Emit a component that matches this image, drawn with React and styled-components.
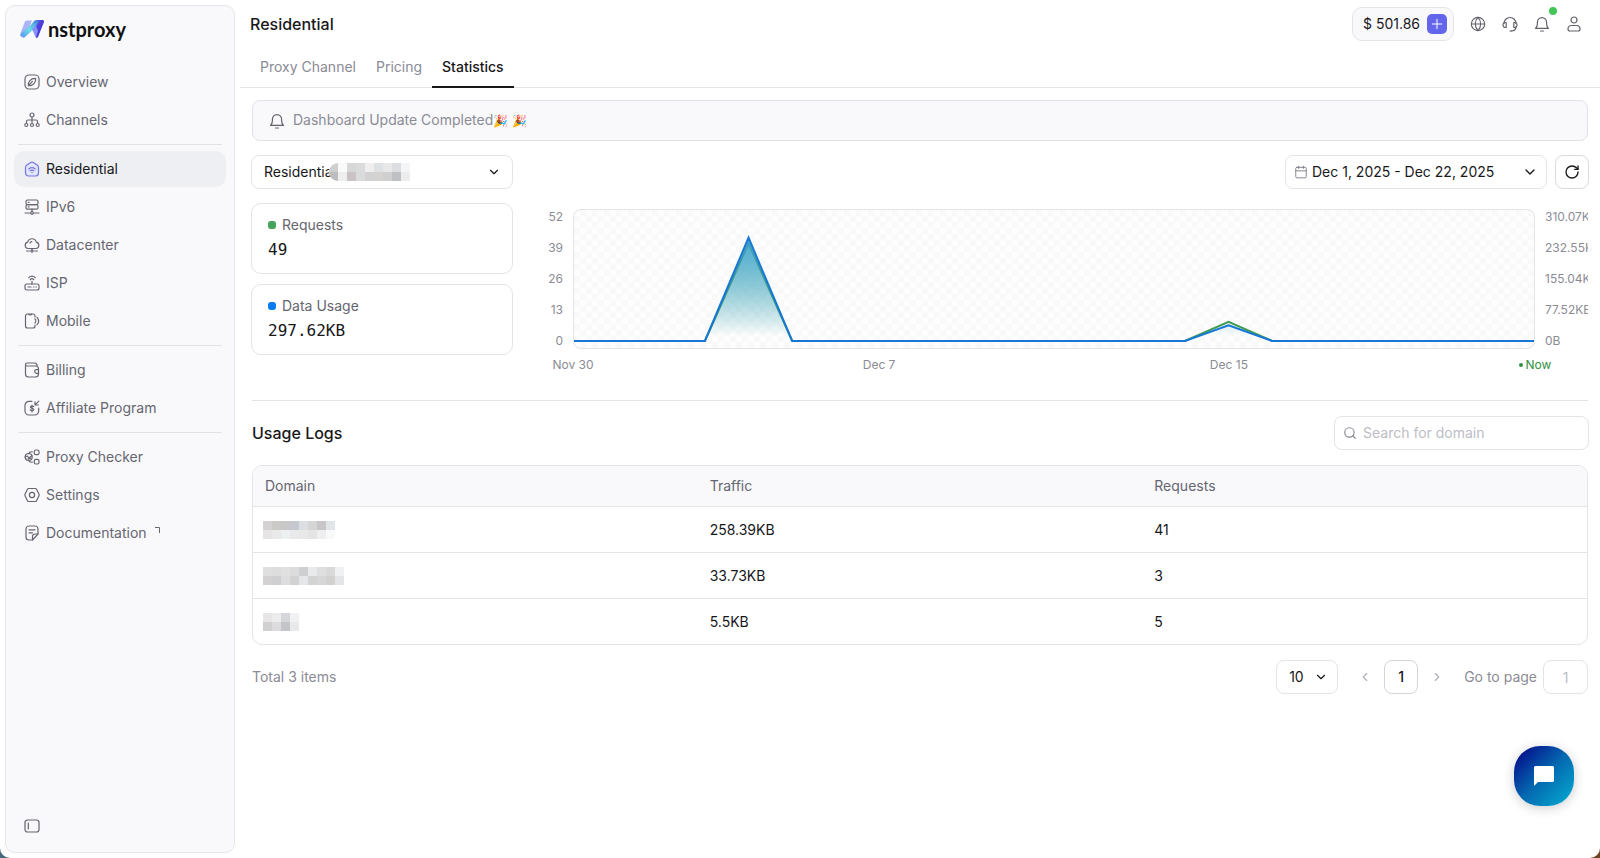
import React, { useState } from "react";
import styled, { createGlobalStyle, css } from "styled-components";
import {
  Calendar,
  ChevronDown,
  ChevronLeft,
  ChevronRight,
  Globe,
  Plus,
  RotateCw,
  Search,
} from "lucide-react";

const icons = {
  overview: (
    <>
      <rect x="1" y="1" width="14" height="14" rx="4" />
      <path d="M4.4 11.6c-.7-3.6 2.3-7.4 7.2-7.2.6 4-2.4 7.6-7.200 7.200z" />
      <path d="M4.400 11.600l4-4.200" />
    </>
  ),
  channels: (
    <>
      <circle cx="8" cy="3" r="2" />
      <path d="M8 5v6M2.500 11V9.500a1.500 1.500 0 0 1 1.500-1.500h8a1.500 1.500 0 0 1 1.500 1.500V11" />
      <circle cx="2.300" cy="13" r="1.500" />
      <circle cx="8" cy="13" r="1.500" />
      <circle cx="13.700" cy="13" r="1.500" />
    </>
  ),
  residential: (
    <>
      <path
        d="M1.500 6.500c0-1.100.5-1.800 1.400-2.400L6.600 1.600a2.500 2.500 0 0 1 2.800 0l3.700 2.500c.9.6 1.400 1.300 1.400 2.400V12a3 3 0 0 1-3 3h-7a3 3 0 0 1-3-3z"
        fill="#e2e5fb"
      />
      <path d="M4.800 8c1.900-1.500 4.500-1.500 6.400 0M6.300 9.800c1-.8 2.400-.8 3.400 0M8 11.600v.1" />
    </>
  ),
  ipv6: (
    <>
      <rect x="2" y="1" width="12" height="4.600" rx="1.500" />
      <rect x="2" y="5.600" width="12" height="4.600" rx="1.500" />
      <path d="M4.300 3.300h.8M4.300 7.900h.8M8 10.200v2.300M1 14h5M10 14h5" />
      <circle cx="8" cy="14" r="1.300" />
    </>
  ),
  datacenter: (
    <>
      <path d="M4 11.500a3.200 3.200 0 0 1-.3-6.300 4.400 4.400 0 0 1 8.600 0 3.200 3.200 0 0 1-.3 6.300z" />
      <path d="M6 6.200a2 2 0 0 1 1.800-1.500M8 11.500V13M2.500 14h3M10.500 14h3" />
      <circle cx="8" cy="14" r="1.100" />
    </>
  ),
  isp: (
    <>
      <rect x="1" y="9" width="14" height="6" rx="2" />
      <path d="M4 12h3M9.500 12h.4M12 12h.4M8 6.300V9M4.800 2.600c1.800-1.900 4.600-1.900 6.400 0M6.300 4.500c1-1 2.400-1 3.400 0" />
    </>
  ),
  mobile: (
    <>
      <path d="M11 4V3a2 2 0 0 0-2-2H3.500a2 2 0 0 0-2 2v10a2 2 0 0 0 2 2H9a2 2 0 0 0 2-2v-1" />
      <path d="M4.800 1.200c.2 1 2.700 1 2.900 0M11 6c1 1 1 3 0 4M13 4.300c2 2.200 2 5.200 0 7.400" />
    </>
  ),
  billing: (
    <>
      <path d="M1.500 3.500v8.500a3 3 0 0 0 3 3h7a3 3 0 0 0 3-3V7a3 3 0 0 0-3-3H3a1.500 1.500 0 0 1-1.500-1.500c0-.8.7-1.500 1.500-1.500h7.500A2.500 2.500 0 0 1 13 3.500v.8" />
      <path d="M14.500 7.700h-2a1.800 1.800 0 0 0 0 3.600h2" />
    </>
  ),
  affiliate: (
    <>
      <path d="M8 1.300H5a4 4 0 0 0-4 4V11a4 4 0 0 0 4 4h5.700a4 4 0 0 0 4-4V8" />
      <path d="M14.800 1.200l-3.600 3.600M11 1.800V5h3.300" />
      <path d="M9.700 6.700c-.7-.8-3.300-.9-3.300.5 0 1.500 3.400.6 3.400 2.200 0 1.500-2.800 1.400-3.600.4M8 5v7" />
    </>
  ),
  checker: (
    <>
      <rect x="10.300" y="1" width="4.700" height="4.700" rx="1.500" />
      <rect x="10.300" y="10.300" width="4.700" height="4.700" rx="1.500" />
      <path d="M8.300 2.800C6 2.600 5 3.500 4.600 4.800M8.300 13.200c-2.300.2-3.300-.7-3.700-2" />
      <circle cx="4.700" cy="8" r="3.500" />
      <path d="M1 8l2.400-1 1.400 2L8 6.800M4 10l2.600-.7" />
    </>
  ),
  settings: (
    <>
      <path d="M4.700 1.500h6.600c.5 0 .9.200 1.100.6l2.500 5c.3.600.3 1.200 0 1.800l-2.500 5c-.2.400-.6.600-1.100.6H4.700c-.5 0-.9-.2-1.100-.6l-2.500-5c-.3-.6-.3-1.200 0-1.800l2.500-5c.2-.4.600-.6 1.100-.6z" />
      <circle cx="8" cy="8" r="2.600" />
    </>
  ),
  docs: (
    <>
      <path d="M14 9V4a3 3 0 0 0-3-3H5a3 3 0 0 0-3 3v8a3 3 0 0 0 3 3h3.500z" />
      <path d="M14 9h-3a2.500 2.500 0 0 0-2.500 2.500V15M5 4.800h6M5 7.800h3.500" />
    </>
  ),
  panel: (
    <>
      <rect x="1" y="2" width="14" height="12" rx="2.500" />
      <path d="M4.300 5v6" />
    </>
  ),
  headset: (
    <>
      <path d="M2 7.500a6 6 0 0 1 12 0M14 10.500c0 3-1.500 4.300-4.500 4.500" />
      <path d="M4.200 6.500v5H3.300A2.300 2.300 0 0 1 1 9.200v-.4a2.300 2.300 0 0 1 2.300-2.300zM11.800 6.500v5h.9A2.300 2.300 0 0 0 15 9.200v-.4a2.300 2.300 0 0 0-2.300-2.300z" />
      <path d="M8 15h1.500" />
    </>
  ),
  bell: (
    <>
      <path d="M1.500 12.300h13c-1.200-1.200-1.900-2.600-1.900-4.300V6.200a4.600 4.600 0 0 0-9.200 0V8c0 1.700-.7 3.100-1.900 4.300z" />
      <path d="M6.500 15h3" />
    </>
  ),
  user: (
    <>
      <circle cx="8" cy="4" r="3" />
      <path d="M5.500 9.500h5a3.500 3.500 0 0 1 3.500 3.500c0 1.200-.8 2-2 2H4c-1.200 0-2-.8-2-2a3.500 3.500 0 0 1 3.500-3.500z" />
    </>
  ),
};

function Icon({ name, size = 16 }) {
  return (
    <svg
      width={size}
      height={size}
      viewBox="0 0 16 16"
      fill="none"
      stroke="currentColor"
      strokeWidth="1.200"
      strokeLinecap="round"
      strokeLinejoin="round"
      aria-hidden="true"
    >
      {icons[name]}
    </svg>
  );
}

function LogoMark() {
  return (
    <svg width="25" height="20" viewBox="0 0 25 20" aria-hidden="true">
      <defs>
        <linearGradient id="logoA" x1="0" y1="1" x2="1" y2="0">
          <stop offset="0" stopColor="#5c8df2" />
          <stop offset="0.450" stopColor="#6fdce8" />
          <stop offset="0.700" stopColor="#58b4e0" />
          <stop offset="1" stopColor="#3f55d8" />
        </linearGradient>
        <linearGradient id="logoB" x1="0" y1="0" x2="1" y2="1">
          <stop offset="0" stopColor="#5a4ff0" />
          <stop offset="1" stopColor="#3a28b8" />
        </linearGradient>
      </defs>
      <path d="M5 2.500Q5.500 1.500 7 1.500h5L9 9l-8 6-.5-1z" fill="#a9b4fa" />
      <path d="M1 14l9-7 4-5q1-1 3-1h4l-7 9-9 8q-1 1-2 .5L.5 17q-.7-1 .5-3z" fill="url(#logoA)" />
      <path d="M12 10l5-4.500 3 5-2.500 8q-1 .5-2-.5z" fill="#8590f8" />
      <path d="M20 1h3q1.500.5 1 2l-6 15q-.5 1-2 .5L18 12l-2-5z" fill="url(#logoB)" />
    </svg>
  );
}

const navGroups = [
  [
    ["overview", "Overview"],
    ["channels", "Channels"],
  ],
  [
    ["residential", "Residential"],
    ["ipv6", "IPv6"],
    ["datacenter", "Datacenter"],
    ["isp", "ISP"],
    ["mobile", "Mobile"],
  ],
  [
    ["billing", "Billing"],
    ["affiliate", "Affiliate Program"],
  ],
  [
    ["checker", "Proxy Checker"],
    ["settings", "Settings"],
    ["docs", "Documentation"],
  ],
];

// redacted values are drawn as rows of flat grey cells
function Mosaic({ rows, cell = 9 }) {
  const width = rows[0].length * cell;
  const height = rows.length * cell;
  return (
    <svg width={width} height={height} shapeRendering="crispEdges" aria-hidden="true">
      {rows.map((row, y) =>
        row.map((fill, x) => (
          <rect key={`${x}-${y}`} x={x * cell} y={y * cell} width={cell} height={cell} fill={fill} />
        ))
      )}
    </svg>
  );
}

const channelMosaic = [
  ["#cfcfd2", "#fafafa", "#d7d7d8", "#d9dbdc", "#f0eeee", "#dfe2e4", "#e8e8e8", "#dbdde0", "#f4f5f7"],
  ["#bdbdc0", "#efeeee", "#c9c3c3", "#d9dbdc", "#d2d2d2", "#d4d3d2", "#cfcfd0", "#bfc0c3", "#ececec"],
];

const logs = [
  {
    traffic: "258.39KB",
    requests: 41,
    domain: [
      ["#d4d2d3", "#cccac7", "#c9c8c8", "#c5c8cf", "#dbdfe4", "#d5d5d5", "#c6c6c9", "#e1e5e9"],
      ["#e6e4e4", "#e9e9e9", "#edf0f0", "#e9e9eb", "#e8e8e9", "#e4e4e4", "#efeff2", "#f8faf9"],
    ],
  },
  {
    traffic: "33.73KB",
    requests: 3,
    domain: [
      ["#dfdfdf", "#dddddd", "#e0e0e0", "#dcdcdd", "#cecfd0", "#e9eaec", "#dfdfdf", "#d9d9d9", "#f0f1f2"],
      ["#d3d1d2", "#cfcfd1", "#dddddf", "#d2d2d2", "#e4e6e9", "#d3d3d4", "#d6d6d6", "#d3d1d0", "#e4e5e9"],
    ],
  },
  {
    traffic: "5.5KB",
    requests: 5,
    domain: [
      ["#e7e5e6", "#ececed", "#d5d7da", "#f0f1f3"],
      ["#d0d0d1", "#dddbdd", "#c4c5c9", "#e8e9eb"],
    ],
  },
];

const DAYS = 22;
const BASE = 131;
const SCALE = 124;

const series = [
  { id: "requests", color: "#3f9b52", fill: "#5fb98a", points: { 4: 41 / 52, 15: 8 / 52 } },
  { id: "usage", color: "#1677d6", fill: "#3aa0e6", points: { 4: 258.39 / 310.07, 15: 39.23 / 310.07 } },
];

function linePath(points) {
  const coords = [];
  for (let day = 0; day <= DAYS; day++) {
    coords.push(`${day} ${BASE - (points[day] || 0) * SCALE}`);
  }
  return `M${coords.join("L")}`;
}

function UsageChart() {
  return (
    <Chart>
      <LeftScale>
        {[52, 39, 26, 13, 0].map((v) => (
          <span key={v}>{v}</span>
        ))}
      </LeftScale>
      <Plot>
        <svg viewBox={`0 0 ${DAYS} 138`} preserveAspectRatio="none" role="img" aria-label="Usage by day">
          <defs>
            {series.map((s) => (
              <linearGradient key={s.id} id={`fill-${s.id}`} x1="0" y1="0" x2="0" y2="1">
                <stop offset="0.050" stopColor={s.fill} stopOpacity="0.700" />
                <stop offset="0.950" stopColor={s.fill} stopOpacity="0" />
              </linearGradient>
            ))}
          </defs>
          {series.map((s) => (
            <g key={s.id}>
              <path d={`${linePath(s.points)}Z`} fill={`url(#fill-${s.id})`} />
              <path
                d={linePath(s.points)}
                fill="none"
                stroke={s.color}
                strokeWidth="2"
                vectorEffect="non-scaling-stroke"
              />
            </g>
          ))}
        </svg>
      </Plot>
      <RightScale>
        {["310.07KB", "232.55KB", "155.04KB", "77.52KB", "0B"].map((v) => (
          <span key={v}>{v}</span>
        ))}
      </RightScale>
      <DayAxis>
        <Tick $day={0}>Nov 30</Tick>
        <Tick $day={7}>Dec 7</Tick>
        <Tick $day={15}>Dec 15</Tick>
        <Tick $day={22} $now>
          Now
        </Tick>
      </DayAxis>
    </Chart>
  );
}

function App() {
  const [query, setQuery] = useState("");

  return (
    <>
      <GlobalStyle />
      <Page>
        <Sidebar>
          <Brand href="#">
            <LogoMark />
            nstproxy
          </Brand>
          <Nav>
            {navGroups.map((group, i) => (
              <NavGroup key={i}>
                {group.map(([icon, label]) => (
                  <NavItem key={icon} href="#" $active={icon === "residential"}>
                    <Icon name={icon} />
                    {label}
                    {icon === "docs" && (
                      <svg width="5" height="6" viewBox="0 0 5 6" fill="none" stroke="currentColor">
                        <path d="M0 .5h4.500V6" />
                      </svg>
                    )}
                  </NavItem>
                ))}
              </NavGroup>
            ))}
          </Nav>
          <CollapseButton aria-label="Collapse sidebar">
            <Icon name="panel" />
          </CollapseButton>
        </Sidebar>

        <Main>
          <Header>
            <PageTitle>Residential</PageTitle>
            <Balance>
              $ 501.86
              <AddButton aria-label="Add funds">
                <Plus size={16} strokeWidth={1.500} />
              </AddButton>
            </Balance>
            <HeaderIcons>
              <IconButton aria-label="Language">
                <Globe size={16} strokeWidth={1.700} />
              </IconButton>
              <IconButton aria-label="Support">
                <Icon name="headset" />
              </IconButton>
              <IconButton aria-label="Notifications">
                <Icon name="bell" />
                <UnreadDot />
              </IconButton>
              <IconButton aria-label="Account">
                <Icon name="user" />
              </IconButton>
            </HeaderIcons>
          </Header>

          <Tabs>
            <Tab href="#">Proxy Channel</Tab>
            <Tab href="#">Pricing</Tab>
            <Tab href="#" $active>
              Statistics
            </Tab>
          </Tabs>

          <Content>
            <Notice>
              <Icon name="bell" />
              <span>
                Dashboard Update Completed<Emoji>🎉 🎉</Emoji>
              </span>
            </Notice>

            <Filters>
              <SelectBox $wide>
                <select aria-label="Channel">
                  <option>Residential</option>
                </select>
                <ChannelMask>
                  <Mosaic rows={channelMosaic} />
                </ChannelMask>
                <ChevronDown size={14} strokeWidth={2} />
              </SelectBox>
              <DateButton>
                <Calendar size={14} strokeWidth={1.500} />
                <span>Dec 1, 2025 - Dec 22, 2025</span>
                <ChevronDown size={16} strokeWidth={2} />
              </DateButton>
              <RefreshButton aria-label="Refresh">
                <RotateCw size={16} strokeWidth={2} />
              </RefreshButton>
            </Filters>

            <Overview>
              <Cards>
                <Card>
                  <CardLabel $color="#46a35a">Requests</CardLabel>
                  <CardValue>49</CardValue>
                </Card>
                <Card>
                  <CardLabel $color="#0a7cf0">Data Usage</CardLabel>
                  <CardValue>297.62KB</CardValue>
                </Card>
              </Cards>
              <UsageChart />
            </Overview>
            <Divider />

            <LogsHeader>
              <h2>Usage Logs</h2>
              <SearchBox>
                <Search size={14} strokeWidth={2} />
                <input
                  aria-label="Search for domain"
                  placeholder="Search for domain"
                  value={query}
                  onChange={(e) => setQuery(e.target.value)}
                />
              </SearchBox>
            </LogsHeader>

            <TableFrame>
              <LogTable>
                <thead>
                  <tr>
                    <th>Domain</th>
                    <th>Traffic</th>
                    <th>Requests</th>
                  </tr>
                </thead>
                <tbody>
                  {logs.map((log) => (
                    <tr key={log.traffic}>
                      <td>
                        <Mosaic rows={log.domain} />
                      </td>
                      <td>{log.traffic}</td>
                      <td>{log.requests}</td>
                    </tr>
                  ))}
                </tbody>
              </LogTable>
            </TableFrame>

            <Pagination>
              <Total>Total 3 items</Total>
              <SelectBox>
                <select aria-label="Rows per page">
                  <option>10</option>
                </select>
                <ChevronDown size={14} strokeWidth={2} />
              </SelectBox>
              <Pager>
                <PageArrow aria-label="Previous page">
                  <ChevronLeft size={14} />
                </PageArrow>
                <PageButton>1</PageButton>
                <PageArrow aria-label="Next page">
                  <ChevronRight size={14} />
                </PageArrow>
              </Pager>
              <GoTo>
                Go to page
                <input placeholder="1" />
              </GoTo>
            </Pagination>
          </Content>
        </Main>

        <ChatButton aria-label="Open chat">
          <svg width="20" height="20" viewBox="0 0 20 20" fill="#fff">
            <path d="M1.500 0h17A1.500 1.500 0 0 1 20 1.500v13a1.500 1.500 0 0 1-1.500 1.500H4l-4 4V1.500A1.500 1.500 0 0 1 1.500 0z" />
          </svg>
        </ChatButton>
      </Page>
    </>
  );
}

export default App;

const GlobalStyle = createGlobalStyle`
  * {
    box-sizing: border-box;
  }
  body {
    margin: 0;
    background: linear-gradient(90deg, #46687c, #6b4524);
    color: #18181b;
    font-family: Inter, "Liberation Sans", sans-serif;
    font-size: 14px;
    line-height: 20px;
  }
  button, input, select {
    font: inherit;
    color: inherit;
  }
  button {
    padding: 0;
    border: 0;
    background: none;
  }
  a {
    color: inherit;
    text-decoration: none;
  }
`;

const outlined = css`
  height: 34px;
  border: 1px solid #e4e4e7;
  border-radius: 8px;
  background: #fff;
`;

const Page = styled.div`
  display: flex;
  min-height: 100vh;
  background: #fff;
  border-radius: 0 0 10px 10px;
`;

const Sidebar = styled.aside`
  display: flex;
  flex-direction: column;
  flex: none;
  width: 230px;
  margin: 5px;
  padding: 0 8px 18px;
  background: #f9f9fc;
  border: 1px solid #e5e5ea;
  border-radius: 10px;
`;

const Brand = styled.a`
  display: flex;
  align-items: center;
  gap: 3px;
  height: 46px;
  padding-left: 6px;
  margin-bottom: 12px;
  color: #111;
  font-family: Lato, sans-serif;
  font-size: 20px;
  font-weight: 700;
`;

const Nav = styled.nav`
  flex: 1;
`;

const NavGroup = styled.div`
  display: flex;
  flex-direction: column;
  gap: 2px;

  & + & {
    margin: 6px 4px 0;
    padding-top: 6px;
    border-top: 1px solid #e1e1e6;
  }
  & + & > a {
    margin: 0 -4px;
  }
`;

const NavItem = styled.a`
  display: flex;
  align-items: center;
  gap: 6px;
  height: 36px;
  padding: 0 10px;
  border-radius: 10px;
  color: ${(p) => (p.$active ? "#18181b" : "#666670")};
  background: ${(p) => (p.$active ? "#eeeff3" : "transparent")};

  > svg:first-child {
    color: ${(p) => (p.$active ? "#7577dd" : "inherit")};
  }
  > svg + svg {
    margin: 0 0 6px 2px;
  }
`;

const CollapseButton = styled.button`
  display: flex;
  padding: 0 10px;
  color: #62626b;
`;

const Main = styled.main`
  flex: 1;
  min-width: 0;
`;

const Header = styled.header`
  display: flex;
  align-items: center;
  height: 48px;
  padding: 0 18px 0 10px;
`;

const PageTitle = styled.h1`
  flex: 1;
  margin: 0;
  font-size: 16px;
  font-weight: 500;
`;

const Balance = styled.div`
  ${outlined}
  display: flex;
  align-items: center;
  gap: 7px;
  margin-right: 16px;
  padding: 0 6px 0 10px;
  background: #f9f9fc;
  border-radius: 10px;
`;

const AddButton = styled.button`
  display: grid;
  place-items: center;
  width: 20px;
  height: 20px;
  border-radius: 5px;
  background: #6366ea;
  color: #fff;
`;

const HeaderIcons = styled.div`
  display: flex;
  gap: 16px;
  color: #62626b;
`;

const IconButton = styled.button`
  position: relative;
  display: flex;
`;

const UnreadDot = styled.span`
  position: absolute;
  top: -9px;
  right: -7px;
  width: 8px;
  height: 8px;
  border-radius: 50%;
  background: #43c558;
`;

const Tabs = styled.nav`
  display: flex;
  height: 40px;
  padding-left: 10px;
  border-bottom: 1px solid #e4e4e7;
`;

const Tab = styled.a`
  height: 40px;
  padding: 9px 10px 0;
  color: ${(p) => (p.$active ? "#18181b" : "#8b8b95")};
  font-weight: ${(p) => (p.$active ? 500 : 400)};
  border-bottom: 2px solid ${(p) => (p.$active ? "#18181b" : "transparent")};
`;

const Content = styled.div`
  padding: 12px 11px 0;
`;

const Notice = styled.div`
  display: flex;
  align-items: center;
  gap: 8px;
  height: 41px;
  margin: 0 1px;
  padding: 0 16px;
  background: #f9f9fc;
  border: 1px solid #e1e1e8;
  border-radius: 8px;
  color: #8b8b95;

  svg {
    color: #62626b;
  }
`;

const Emoji = styled.span`
  font-size: 12px;
`;

const Filters = styled.div`
  display: flex;
  gap: 8px;
  margin-top: 14px;
`;

const SelectBox = styled.div`
  position: relative;
  display: flex;
  align-items: center;
  width: ${(p) => (p.$wide ? "262px" : "62px")};
  margin-right: ${(p) => (p.$wide ? "auto" : "0")};

  select {
    ${outlined}
    width: 100%;
    padding: 0 12px;
    appearance: none;
  }
  > svg {
    position: absolute;
    right: ${(p) => (p.$wide ? "12px" : "10px")};
    pointer-events: none;
  }
`;

const ChannelMask = styled.span`
  position: absolute;
  left: 78px;
  display: flex;
  border-radius: 9px 0 0 9px;
  overflow: hidden;
  background: #fff;
  pointer-events: none;
`;

const DateButton = styled.button`
  ${outlined}
  display: flex;
  align-items: center;
  gap: 4px;
  width: 262px;
  padding: 0 8px 0 8px;
  text-align: left;

  span {
    flex: 1;
  }
  svg:first-child {
    color: #777780;
  }
`;

const RefreshButton = styled.button`
  ${outlined}
  display: grid;
  place-items: center;
  width: 34px;
  border-color: #d9d9de;
`;

const Overview = styled.section`
  display: flex;
  gap: 24px;
  padding: 14px 1px 27px 0;
`;

const Divider = styled.hr`
  margin: 0 1px;
  border: 0;
  border-top: 1px solid #e4e4e7;
`;

const Cards = styled.div`
  display: flex;
  flex-direction: column;
  flex: none;
  gap: 10px;
  width: 262px;
`;

const Card = styled.div`
  height: 71px;
  padding: 11px 16px;
  border: 1px solid #e4e4e7;
  border-radius: 10px;
`;

const CardLabel = styled.div`
  display: flex;
  align-items: center;
  gap: 6px;
  color: #666670;

  &::before {
    content: "";
    width: 8px;
    height: 8px;
    border-radius: 3px;
    background: ${(p) => p.$color};
  }
`;

const CardValue = styled.div`
  margin-top: 5px;
  font-family: "DejaVu Sans Mono", monospace;
  font-size: 16px;
`;

const Chart = styled.div`
  display: grid;
  grid-template-columns: 26px 1fr 43px;
  grid-template-rows: 140px 16px;
  gap: 8px 10px;
  flex: 1;
  min-width: 0;
  padding-top: 6px;
  overflow: hidden;
  color: #8b8b95;
  font-size: 12px;
  line-height: 16px;
`;

const LeftScale = styled.div`
  display: flex;
  flex-direction: column;
  justify-content: space-between;
  text-align: right;
`;

const RightScale = styled(LeftScale)`
  overflow: hidden;
  text-align: left;
`;

const Plot = styled.div`
  border: 1px solid #e4e4e7;
  border-radius: 8px;
  background: repeating-conic-gradient(#f9f9f9 0 25%, #fdfdfd 0 50%) 0 0 / 12px 12px;

  svg {
    display: block;
    width: 100%;
    height: 138px;
    overflow: visible;
  }
`;

// one column per day, widened by half a column on both sides
const DayAxis = styled.div`
  grid-column: 2;
  display: grid;
  grid-template-columns: repeat(23, minmax(0, 1fr));
  margin: 0 calc(-100% / 44);
`;

const Tick = styled.span`
  grid-column: ${(p) => p.$day + 1};
  display: flex;
  align-items: center;
  justify-content: center;
  gap: 3px;
  white-space: nowrap;
  color: ${(p) => (p.$now ? "#2f9141" : "inherit")};

  &::before {
    content: ${(p) => (p.$now ? '""' : "none")};
    width: 4px;
    height: 4px;
    border-radius: 50%;
    background: currentColor;
  }
`;

const LogsHeader = styled.div`
  display: flex;
  align-items: center;
  justify-content: space-between;
  padding: 15px 0;

  h2 {
    margin: 0 0 0 1px;
    font-size: 16px;
    font-weight: 500;
  }
`;

const SearchBox = styled.label`
  ${outlined}
  display: flex;
  align-items: center;
  gap: 6px;
  width: 255px;
  padding: 0 8px;
  color: #8b8b95;

  input {
    flex: 1;
    min-width: 0;
    padding: 0;
    border: 0;
    outline: 0;
    background: none;
  }
  input::placeholder {
    color: #bdbdc6;
  }
`;

const TableFrame = styled.div`
  margin: 0 1px;
  border: 1px solid #e4e4e7;
  border-radius: 10px;
  overflow: hidden;
`;

const LogTable = styled.table`
  width: 100%;
  table-layout: fixed;
  border-spacing: 0;

  th,
  td {
    height: 46px;
    padding: 0 12px;
    text-align: left;
    border-bottom: 1px solid #e4e4e7;
  }
  thead th {
    height: 41px;
    background: #f9f9fc;
    color: #666670;
    font-weight: 400;
  }
  td:first-child {
    padding-left: 10px;
  }
  tr:last-child td {
    height: 45px;
    border-bottom: 0;
  }
  td svg {
    display: block;
  }
`;

const Pagination = styled.div`
  display: flex;
  align-items: center;
  margin: 15px 1px 0;
`;

const Total = styled.span`
  flex: 1;
  color: #8b8b95;
`;

const Pager = styled.div`
  display: flex;
  align-items: center;
  gap: 12px;
  margin: 0 20px;
`;

const PageArrow = styled.button`
  display: flex;
  color: #b0b0b8;
`;

const PageButton = styled.button`
  ${outlined}
  width: 34px;
  border-color: #d4d4da;
  font-weight: 500;
`;

const GoTo = styled.label`
  display: flex;
  align-items: center;
  gap: 6px;
  color: #8b8b95;

  input {
    ${outlined}
    width: 45px;
    padding: 0;
    text-align: center;
  }
  input::placeholder {
    color: #bdbdc6;
  }
`;

const ChatButton = styled.button`
  position: fixed;
  right: 26px;
  bottom: 52px;
  display: grid;
  place-items: center;
  width: 60px;
  height: 60px;
  border-radius: 26px;
  background: linear-gradient(135deg, #05128c 10%, #0468b0 50%, #04a8cf 95%);
  box-shadow: 0 2px 12px rgba(0, 0, 0, 0.2);
`;
